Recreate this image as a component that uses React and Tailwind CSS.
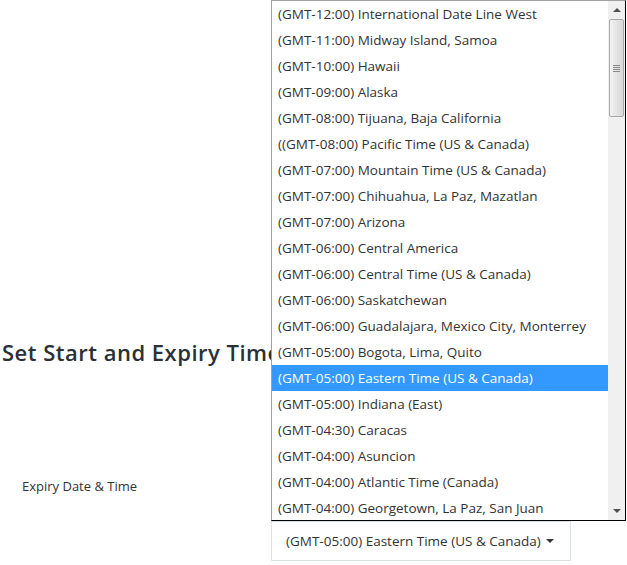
import React from 'react';

const ZONES = [
  '(GMT-12:00) International Date Line West',
  '(GMT-11:00) Midway Island, Samoa',
  '(GMT-10:00) Hawaii',
  '(GMT-09:00) Alaska',
  '(GMT-08:00) Tijuana, Baja California',
  '((GMT-08:00) Pacific Time (US & Canada)',
  '(GMT-07:00) Mountain Time (US & Canada)',
  '(GMT-07:00) Chihuahua, La Paz, Mazatlan',
  '(GMT-07:00) Arizona',
  '(GMT-06:00) Central America',
  '(GMT-06:00) Central Time (US & Canada)',
  '(GMT-06:00) Saskatchewan',
  '(GMT-06:00) Guadalajara, Mexico City, Monterrey',
  '(GMT-05:00) Bogota, Lima, Quito',
  '(GMT-05:00) Eastern Time (US & Canada)',
  '(GMT-05:00) Indiana (East)',
  '(GMT-04:30) Caracas',
  '(GMT-04:00) Asuncion',
  '(GMT-04:00) Atlantic Time (Canada)',
  '(GMT-04:00) Georgetown, La Paz, San Juan',
];

const SELECTED = 14;

// classic windows style scrollbar, drawn by hand
function Scrollbar() {
  return (
    <div className="w-[17px] h-full bg-[#f0f0f0] flex flex-col">
      <div className="h-[18px] flex items-center justify-center">
        <div className="w-0 h-0 border-x-[4px] border-x-transparent border-b-[4px] border-b-[#505050]" />
      </div>
      <div className="h-[98px] mx-[1px] rounded-[2px] border border-[#a8a8a8] bg-gradient-to-r from-[#f4f4f4] via-[#e4e4e4] to-[#d8d8d8] flex flex-col items-center justify-center gap-[1px]">
        <div className="w-[7px] h-px bg-[#8a8a8a]" />
        <div className="w-[7px] h-px bg-[#8a8a8a]" />
        <div className="w-[7px] h-px bg-[#8a8a8a]" />
        <div className="w-[7px] h-px bg-[#8a8a8a]" />
      </div>
      <div className="flex-1" />
      <div className="h-[18px] flex items-center justify-center">
        <div className="w-0 h-0 border-x-[4px] border-x-transparent border-t-[4px] border-t-[#505050]" />
      </div>
    </div>
  );
}

function ZoneMenu() {
  return (
    <div className="absolute left-0 bottom-full w-[355px] h-[521px] bg-white border-t border-l border-t-[#a0a0a0] border-l-[#a0a0a0] border-r border-b border-r-black border-b-black flex z-10">
      <ul className="flex-1 overflow-hidden">
        {ZONES.map((z, i) => (
          <li
            key={i}
            className={`h-[26px] leading-[26px] pl-[6px] whitespace-nowrap text-[13.5px] ${
              i === SELECTED ? 'bg-[#3399ff] text-white' : 'text-[#333]'
            }`}
          >
            {z}
          </li>
        ))}
      </ul>
      <Scrollbar />
    </div>
  );
}

export default function App() {
  return (
    <div className="h-[565px] bg-white overflow-hidden font-['Open_Sans',sans-serif] text-[13px] text-[#333]">
      <h2 className="pt-[339px] pl-[2px] text-[22px] leading-[26px] font-semibold tracking-[0.5px] text-[#2b3036] whitespace-nowrap">
        Set Start and Expiry Time
      </h2>

      <div className="flex mt-[111px]">
        <div className="w-[271px] pl-[22px] leading-[20px] text-[13px] text-[#333]">Expiry Date &amp; Time</div>
        <div className="pt-[45px]">
          <div className="relative">
            <ZoneMenu />
            <button className="w-[300px] h-[40px] border border-[#dbe1e8] bg-white pl-[14px] flex items-center text-[#333] text-[13.5px] whitespace-nowrap">
              (GMT-05:00) Eastern Time (US &amp; Canada)
              <span className="ml-[5px] w-0 h-0 border-x-[4px] border-x-transparent border-t-[4px] border-t-[#333]" />
            </button>
          </div>
        </div>
      </div>
    </div>
  );
}
